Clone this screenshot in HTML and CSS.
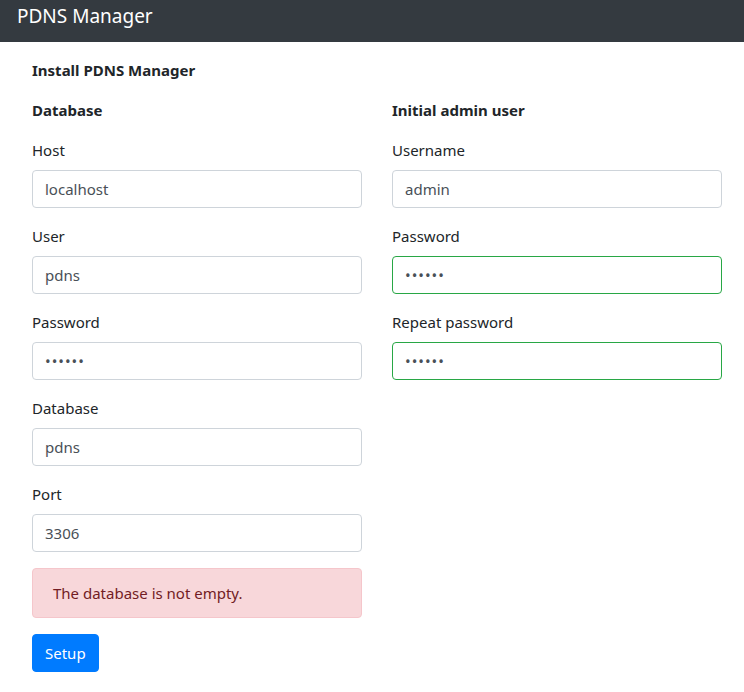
FILE: index.html
```html
<!DOCTYPE html>
<html lang="en">
<head>
<meta charset="utf-8">
<title>PDNS Manager</title>
<link rel="stylesheet" href="styles.css">
</head>
<body>
<nav class="navbar"><span class="brand">PDNS Manager</span></nav>
<main class="page">
  <h1 class="title">Install PDNS Manager</h1>
  <div class="row">
    <section class="col">
      <h2 class="heading">Database</h2>
      <div class="group"><label class="label">Host</label><input class="field" type="text" value="localhost"></div>
      <div class="group"><label class="label">User</label><input class="field" type="text" value="pdns"></div>
      <div class="group"><label class="label">Password</label><input class="field secret" type="password" value="secret"></div>
      <div class="group"><label class="label">Database</label><input class="field" type="text" value="pdns"></div>
      <div class="group"><label class="label">Port</label><input class="field" type="text" value="3306"></div>
      <div class="alert">The database is not empty.</div>
      <button class="btn" type="button">Setup</button>
    </section>
    <section class="col">
      <h2 class="heading">Initial admin user</h2>
      <div class="group"><label class="label">Username</label><input class="field" type="text" value="admin"></div>
      <div class="group"><label class="label">Password</label><input class="field secret valid" type="password" value="secret"></div>
      <div class="group"><label class="label">Repeat password</label><input class="field secret valid" type="password" value="secret"></div>
    </section>
  </div>
</main>
</body>
</html>
```
FILE: styles.css
```css
* { box-sizing: border-box; }
html, body { margin: 0; padding: 0; background: #fff; }
body {
  font-family: "Noto Sans", "Open Sans", sans-serif;
  font-size: 16px;
  line-height: 24px;
  color: #212529;
}
.navbar {
  height: 42px;
  background: #343a40;
  padding: 1px 0 0 17px;
}
.brand {
  color: #fff;
  font-size: 19px;
  line-height: 30px;
}
.page {
  padding: 0 7px 0 17px;
}
.title {
  margin: 16px 15px 16px;
  font-size: 15px;
  font-weight: 700;
  line-height: 24px;
}
.row {
  display: flex;
}
.col {
  width: 360px;
  padding: 0 15px;
}
.heading {
  margin: 0 0 16px;
  font-size: 15px;
  font-weight: 700;
  line-height: 24px;
}
.group {
  margin-bottom: 16px;
}
.label {
  display: block;
  margin-bottom: 8px;
  font-size: 15px;
}
.field {
  display: block;
  width: 100%;
  height: 38px;
  padding: 6px 12px;
  border: 1px solid #ced4da;
  border-radius: 4px;
  font: inherit;
  font-size: 15px;
  color: #495057;
  background: #fff;
  outline: none;
}
.field.secret {
  letter-spacing: 1px;
}
.field.valid {
  border-color: #28a745;
}
.alert {
  margin-bottom: 16px;
  padding: 12px 20px;
  border: 1px solid #f5c6cb;
  border-radius: 4px;
  background: #f8d7da;
  color: #721c24;
  font-size: 15px;
}
.btn {
  display: block;
  height: 38px;
  padding: 6px 12px;
  border: 1px solid #007bff;
  border-radius: 4px;
  background: #007bff;
  color: #fff;
  font: inherit;
  font-size: 15px;
}
```
